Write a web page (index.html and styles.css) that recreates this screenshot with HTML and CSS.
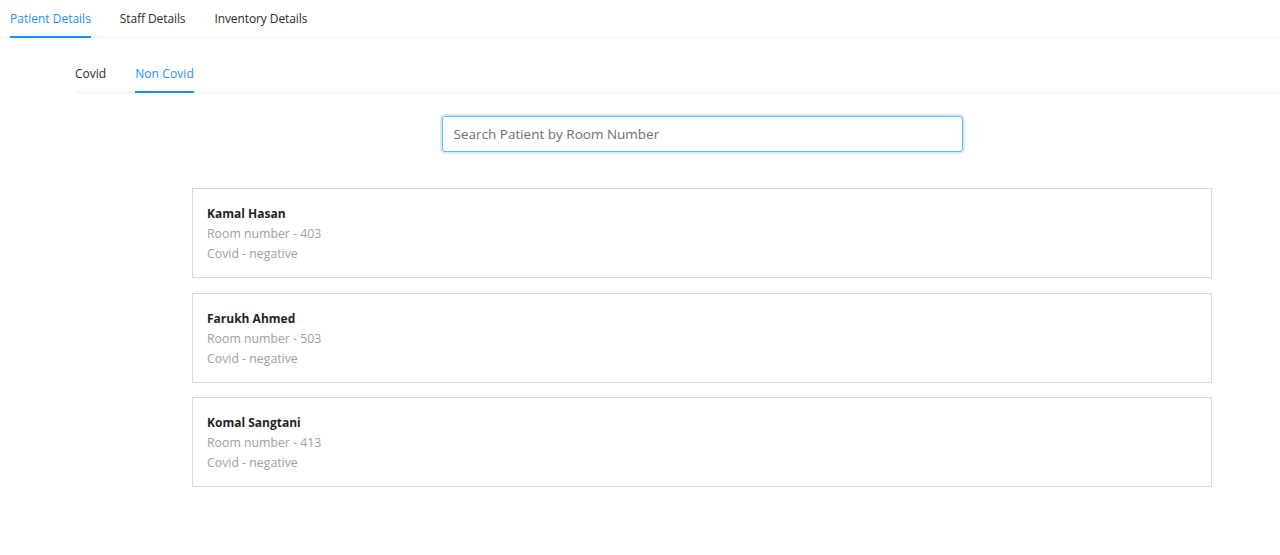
FILE: index.html
```html
<!DOCTYPE html>
<html>
<head>
<meta charset="utf-8">
<link rel="stylesheet" href="styles.css">
</head>
<body>
<div class="tabs main-tabs">
  <div class="tab active">Patient Details</div>
  <div class="tab">Staff Details</div>
  <div class="tab">Inventory Details</div>
</div>
<div class="sub">
  <div class="tabs sub-tabs">
    <div class="tab">Covid</div>
    <div class="tab active">Non Covid</div>
  </div>
</div>
<div class="content">
  <div class="search-row">
    <input class="search" type="text" placeholder="Search Patient by Room Number">
  </div>
  <div class="card">
    <div class="name">Kamal Hasan</div>
    <div class="meta">Room number - 403</div>
    <div class="meta">Covid - negative</div>
  </div>
  <div class="card">
    <div class="name">Farukh Ahmed</div>
    <div class="meta">Room number - 503</div>
    <div class="meta">Covid - negative</div>
  </div>
  <div class="card">
    <div class="name">Komal Sangtani</div>
    <div class="meta">Room number - 413</div>
    <div class="meta">Covid - negative</div>
  </div>
</div>
</body>
</html>
```
FILE: styles.css
```css
* { box-sizing: border-box; }
body {
  margin: 0;
  font-family: "Open Sans", "Noto Sans", sans-serif;
  color: #262626;
  background: #fff;
}
.tabs {
  display: flex;
  border-bottom: 1px solid #f0f0f0;
}
.tab {
  position: relative;
  font-size: 12px;
  line-height: 20px;
  padding: 9px 0 8px;
  color: #2b2b2b;
}
.tab.active { color: #1890ff; }
.tab.active::after {
  content: "";
  position: absolute;
  left: 0; right: 0; bottom: -1px;
  height: 2px;
  background: #1890ff;
}
.main-tabs {
  padding-left: 10px;
  gap: 29px;
}
.main-tabs .tab:not(.active) { letter-spacing: -0.1px; }
.sub {
  padding-left: 75px;
  margin-top: 17px;
}
.sub-tabs { gap: 29px; }
.sub-tabs .tab.active { letter-spacing: 0.1px; }
.content {
  margin-left: 192px;
  width: 1020px;
}
.search-row {
  display: flex;
  justify-content: center;
  margin-top: 23px;
  margin-bottom: 36px;
}
.search {
  width: 521px;
  height: 36px;
  border: 1px solid #69b4ff;
  border-radius: 3px;
  box-shadow: 0 0 0 2px rgba(24,144,255,0.18);
  padding: 0 11px;
  font-family: inherit;
  font-size: 13.5px;
  color: #262626;
  outline: none;
}
.search::placeholder { color: #707070; }
.card {
  border: 1px solid #d9d9d9;
  padding: 15px 14px 13px;
  margin-bottom: 14.5px;
  line-height: 20px;
}
.name { font-weight: 700; color: #1f1f1f; font-size: 12px; }
.meta { color: #a0a0a0; font-size: 12.3px; }
```
